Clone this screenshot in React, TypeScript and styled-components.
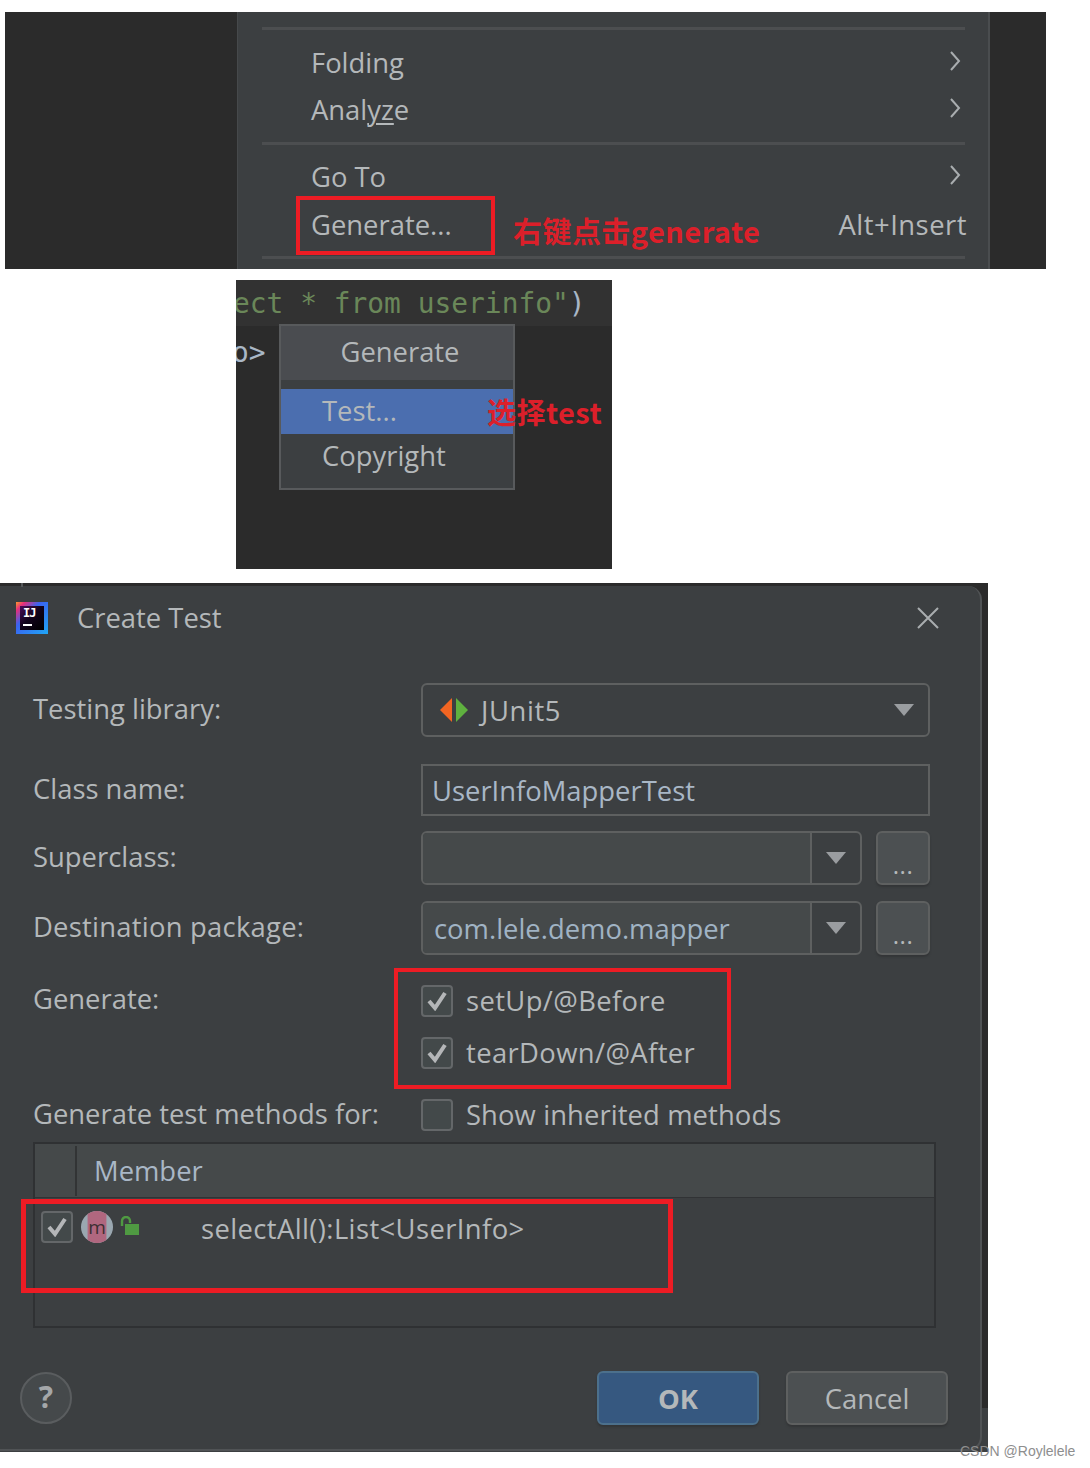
import React from "react";
import styled, { createGlobalStyle } from "styled-components";

const UI = `"Open Sans", "Noto Sans CJK SC", sans-serif`;
const RED = "#ed1c24";

const Global = createGlobalStyle`
  html, body { margin: 0; padding: 0; background: #fff; }
  * { box-sizing: border-box; }
`;

const Page = styled.div`
  position: relative;
  width: 1090px;
  height: 1468px;
  overflow: hidden;
  padding-top: 12px;
  font-family: ${UI};
  font-size: 27.4px;
  color: #b4b8ba;
  background: #fff;
`;

/* ---- shared overlays ---- */
const RedBox = styled.div<{ $x: number; $y: number; $w: number; $h: number; $t?: number }>`
  position: absolute;
  left: ${(p) => p.$x}px;
  top: ${(p) => p.$y}px;
  width: ${(p) => p.$w}px;
  height: ${(p) => p.$h}px;
  border: ${(p) => p.$t ?? 4}px solid ${RED};
`;
const Note = styled.div<{ $x: number; $y: number }>`
  position: absolute;
  left: ${(p) => p.$x}px;
  top: ${(p) => p.$y}px;
  font-family: "Noto Sans CJK SC", sans-serif;
  font-weight: 700;
  font-size: 29px;
  line-height: 36px;
  letter-spacing: 0.45px;
  color: #dc1f2a;
  white-space: nowrap;
`;

/* ---- context menu ---- */
const MenuShot = styled.section`
  margin-left: 5px;
  width: 1041px;
  height: 257px;
  background: #2b2b2b;
  padding-left: 232px;
  padding-right: 56px;
`;
const MenuPanel = styled.div`
  height: 100%;
  background: #3c3f41;
  border-left: 1px solid #46494b;
  border-right: 2px solid #4a4d4f;
  padding: 15px 23px 0 24px;
`;
const MenuRule = styled.div<{ $before?: number; $after?: number }>`
  height: 3px;
  background: #4c4e50;
  margin-top: ${(p) => p.$before ?? 0}px;
  margin-bottom: ${(p) => p.$after ?? 0}px;
`;
const MenuRow = styled.div<{ $h?: number }>`
  height: ${(p) => p.$h ?? 47}px;
  padding: 0 3px 0 49px;
  display: flex;
  align-items: center;
  justify-content: space-between;
`;
const MenuText = styled.span`
  margin-top: 1px;
`;
const Key = styled.span`
  margin: 1px -5px 0 0;
  letter-spacing: 0.5px;
`;
const U = styled.span`
  text-decoration: underline;
  text-underline-offset: 3px;
  text-decoration-thickness: 2px;
`;
const ChevronIcon = styled.svg`
  margin-top: -2px;
`;
const Chevron = () => (
  <ChevronIcon width="14" height="22" viewBox="0 0 14 22" fill="none">
    <path d="M3 2l8 9-8 9" stroke="#a9adaf" strokeWidth="2" />
  </ChevronIcon>
);

/* ---- editor with generate popup ---- */
const EditorShot = styled.section`
  position: relative;
  margin: 11px 0 0 236px;
  width: 376px;
  height: 289px;
  background: #2b2b2b;
  overflow: hidden;
  font-family: "DejaVu Sans Mono", monospace;
  font-size: 27.9px;
  color: #a9b7c6;
`;
const CodeBand = styled.div`
  height: 46px;
  line-height: 47px;
  background: #323232;
  white-space: pre;
  text-indent: -3px;
`;
const CodeLine = styled.div`
  line-height: 54px;
  text-indent: -4px;
  white-space: pre;
`;
const Str = styled.span`
  color: #6a8759;
`;
const Popup = styled.div`
  position: absolute;
  left: 43px;
  top: 44px;
  width: 236px;
  height: 166px;
  background: #3c3f41;
  border: 2px solid #585a5c;
  font-family: ${UI};
  font-size: 27.4px;
  color: #b4b8ba;
`;
const PopupHead = styled.div`
  height: 54px;
  line-height: 52px;
  background: #4a4c50;
  margin-bottom: 9px;
  text-align: center;
  padding-left: 6px;
`;
const PopupItem = styled.div<{ $on?: boolean }>`
  height: 45px;
  line-height: 44px;
  padding-left: 41px;
  background: ${(p) => (p.$on ? "#4b6eaf" : "transparent")};
`;

/* ---- Create Test dialog ---- */
const DialogFrame = styled.section`
  position: relative;
  margin-top: 14px;
  width: 988px;
  height: 869px;
  padding-top: 3px;
  background: linear-gradient(#2b2b2b 825px, #3c3f41 825px);
  &::before {
    content: "";
    position: absolute;
    left: 21px;
    top: 0;
    width: 2px;
    height: 4px;
    background: #55585a;
  }
`;
const Dialog = styled.div`
  width: 982px;
  height: 865px;
  padding-top: 16px;
  background: #3c3f41;
  border-right: 2px solid #505355;
  border-bottom: 2px solid #505355;
  border-radius: 0 14px 14px 0;
`;
const TitleBar = styled.header`
  display: flex;
  align-items: center;
  height: 32px;
  padding: 0 40px 0 16px;
`;
const Logo = styled.div`
  width: 32px;
  height: 32px;
  padding: 4px;
  background: linear-gradient(135deg, #fd9b2c 0%, #e62f7b 14%, #3a63f0 38%, #1fa7f5 100%);
  flex: none;
`;
const LogoInner = styled.div`
  width: 24px;
  height: 24px;
  background: linear-gradient(135deg, #4a0c58 0%, #12031c 45%, #000 100%);
  color: #fff;
  padding: 1px 0 0 3px;
  font-family: "DejaVu Sans Mono", monospace;
  font-weight: 700;
  font-size: 12px;
  line-height: 12px;
  letter-spacing: -1px;
  &::after {
    content: "";
    display: block;
    width: 9px;
    height: 2px;
    margin-top: 5px;
    background: #fff;
  }
`;
const Title = styled.h1`
  flex: 1;
  margin: 0 0 0 29px;
  font: inherit;
  line-height: 36px;
`;
const Form = styled.div`
  margin-top: 49px;
  padding-left: 33px;
  width: 930px;
`;
const Row = styled.div<{ $top?: number; $start?: boolean }>`
  display: flex;
  align-items: ${(p) => (p.$start ? "flex-start" : "center")};
  margin-top: ${(p) => p.$top ?? 0}px;
`;
const Label = styled.div<{ $wide?: boolean }>`
  width: 388px;
  height: 32px;
  line-height: 32px;
  flex: none;
  margin-top: -2px;
  white-space: nowrap;
  letter-spacing: ${(p) => (p.$wide ? "0.25px" : "0")};
`;
const Select = styled.div`
  flex: 1;
  height: 54px;
  border: 2px solid #5e6060;
  border-radius: 6px;
  display: flex;
  align-items: center;
  padding: 0 14px 0 16px;
`;
const SelectValue = styled.span`
  flex: 1;
  margin-left: 12px;
  letter-spacing: 0.6px;
`;
const Arrow = styled.span`
  flex: none;
  width: 0;
  height: 0;
  border-left: 10px solid transparent;
  border-right: 10px solid transparent;
  border-top: 12px solid #9a9da0;
`;
const TextField = styled.div`
  flex: 1;
  height: 52px;
  border: 2px solid #5e6060;
  padding-left: 9px;
  display: flex;
  align-items: center;
  color: #a9b7c6;
`;
const Combo = styled.div`
  width: 441px;
  height: 54px;
  border: 2px solid #5e6060;
  border-radius: 6px;
  display: flex;
  overflow: hidden;
`;
const ComboInput = styled.div`
  flex: 1;
  background: #45494a;
  border-right: 2px solid #5e6060;
  padding-left: 11px;
  display: flex;
  align-items: center;
  color: #a0b3c4;
`;
const ComboButton = styled.div`
  width: 48px;
  display: flex;
  align-items: center;
  justify-content: center;
`;
const Browse = styled.div`
  width: 54px;
  height: 54px;
  margin-left: 14px;
  border: 2px solid #5e6060;
  border-radius: 6px;
  background: #4c5052;
  box-shadow: 0 2px 2px #333537;
  text-align: center;
  font-size: 24px;
  line-height: 64px;
  letter-spacing: 0.5px;
`;
const Checks = styled.div`
  display: flex;
  flex-direction: column;
  gap: 20px;
`;
const CheckRow = styled.div`
  display: flex;
  align-items: center;
  height: 32px;
`;
const Box = styled.div`
  width: 32px;
  height: 32px;
  flex: none;
  border: 2px solid #646769;
  border-radius: 4px;
  background: #43494a;
  display: flex;
  align-items: center;
  justify-content: center;
`;
const CheckText = styled.span<{ $wide?: boolean }>`
  margin: -1px 0 0 13px;
  white-space: nowrap;
  letter-spacing: ${(p) => (p.$wide ? "0.38px" : "0.1px")};
`;
const Tick = () => (
  <svg width="22" height="20" viewBox="0 0 22 20" fill="none">
    <path d="M3 10l6 7L19 2" stroke="#b4b6b8" strokeWidth="4" />
  </svg>
);
const Table = styled.div`
  margin-top: 11px;
  width: 903px;
  height: 186px;
  border: 2px solid #2f3133;
  background: #3c3f41;
`;
const TableHead = styled.div`
  height: 54px;
  background: #45494a;
  border-bottom: 1px solid #313335;
  display: flex;
  align-items: center;
`;
const HeadSpacer = styled.div`
  width: 42px;
  height: 50px;
  border-right: 2px solid #323435;
`;
const HeadCell = styled.div`
  margin-left: 17px;
  color: #a9b7c6;
`;
const TableRow = styled.div`
  display: flex;
  align-items: center;
  height: 32px;
  margin-top: 13px;
  padding-left: 6px;
`;
const MemberIcon = styled.svg`
  margin-left: 8px;
  flex: none;
`;
const LockIcon = styled.svg`
  margin: -3px 0 0 7px;
  flex: none;
`;
const MemberName = styled.span`
  margin: 2px 0 0 61px;
  white-space: nowrap;
  letter-spacing: 0.4px;
`;
const Footer = styled.footer`
  display: flex;
  align-items: center;
  margin-top: 43px;
  padding: 0 32px 0 20px;
`;
const Help = styled.div`
  width: 52px;
  height: 52px;
  border-radius: 50%;
  background: #45494b;
  border: 2px solid #5a5d5f;
  text-align: center;
  font-weight: 700;
  font-size: 30px;
  line-height: 46px;
  color: #a4a7a9;
  margin-right: auto;
`;
const Button = styled.div<{ $primary?: boolean }>`
  width: 162px;
  height: 54px;
  margin-left: 27px;
  border-radius: 6px;
  border: 2px solid ${(p) => (p.$primary ? "#4c708c" : "#5e6060")};
  background: ${(p) => (p.$primary ? "#365880" : "#4c5052")};
  box-shadow: 0 2px 2px #333537;
  display: flex;
  align-items: center;
  justify-content: center;
  font-weight: ${(p) => (p.$primary ? 700 : 400)};
`;
const Watermark = styled.div`
  position: absolute;
  left: 960px;
  top: 1442px;
  font-family: "Liberation Sans", sans-serif;
  font-size: 14px;
  line-height: 18px;
  color: #8e8e8e;
  white-space: nowrap;
`;

export default function App() {
  return (
    <Page>
      <Global />
      <MenuShot>
        <MenuPanel>
          <MenuRule $after={8} />
          <MenuRow><MenuText>Folding</MenuText><Chevron /></MenuRow>
          <MenuRow><MenuText>Anal<U>yz</U>e</MenuText><Chevron /></MenuRow>
          <MenuRule $before={10} $after={7} />
          <MenuRow><MenuText>Go To</MenuText><Chevron /></MenuRow>
          <MenuRow $h={50}><MenuText>Generate...</MenuText><Key>Alt+Insert</Key></MenuRow>
          <MenuRule $before={7} />
        </MenuPanel>
      </MenuShot>

      <EditorShot>
        <CodeBand><Str>ect * from userinfo"</Str>)</CodeBand>
        <CodeLine>o&gt;</CodeLine>
        <Popup>
          <PopupHead>Generate</PopupHead>
          <PopupItem $on>Test...</PopupItem>
          <PopupItem>Copyright</PopupItem>
        </Popup>
      </EditorShot>

      <DialogFrame>
        <Dialog>
          <TitleBar>
            <Logo><LogoInner>IJ</LogoInner></Logo>
            <Title>Create Test</Title>
            <svg width="24" height="24" viewBox="0 0 24 24" fill="none">
              <path d="M2 2l20 20M22 2L2 22" stroke="#a9adaf" strokeWidth="2" />
            </svg>
          </TitleBar>
          <Form>
            <Row>
              <Label>Testing library:</Label>
              <Select>
                <svg width="30" height="24" viewBox="0 0 30 24">
                  <path d="M13 0v24L1 12z" fill="#f26522" />
                  <path d="M17 0v24l12-12z" fill="#5fb13f" />
                </svg>
                <SelectValue>JUnit5</SelectValue>
                <Arrow />
              </Select>
            </Row>
            <Row $top={27}>
              <Label>Class name:</Label>
              <TextField>UserInfoMapperTest</TextField>
            </Row>
            <Row $top={15}>
              <Label>Superclass:</Label>
              <Combo>
                <ComboInput />
                <ComboButton><Arrow /></ComboButton>
              </Combo>
              <Browse>...</Browse>
            </Row>
            <Row $top={16}>
              <Label $wide>Destination package:</Label>
              <Combo>
                <ComboInput>com.lele.demo.mapper</ComboInput>
                <ComboButton><Arrow /></ComboButton>
              </Combo>
              <Browse>...</Browse>
            </Row>
            <Row $top={30} $start>
              <Label>Generate:</Label>
              <Checks>
                <CheckRow><Box><Tick /></Box><CheckText $wide>setUp/@Before</CheckText></CheckRow>
                <CheckRow><Box><Tick /></Box><CheckText $wide>tearDown/@After</CheckText></CheckRow>
              </Checks>
            </Row>
            <Row $top={30}>
              <Label>Generate test methods for:</Label>
              <CheckRow><Box /><CheckText>Show inherited methods</CheckText></CheckRow>
            </Row>
            <Table>
              <TableHead>
                <HeadSpacer />
                <HeadCell>Member</HeadCell>
              </TableHead>
              <TableRow>
                <Box><Tick /></Box>
                <MemberIcon width="32" height="32" viewBox="0 0 32 32">
                  <circle cx="16" cy="16" r="16" fill="#9aa7b0" />
                  <path d="M6.6 3A16 16 0 0 1 25.4 3V29A16 16 0 0 1 6.6 29Z" fill="#b0677f" />
                  <text x="16" y="23" textAnchor="middle" fontSize="19" fontFamily="Open Sans" fill="#3c2f33">m</text>
                </MemberIcon>
                <LockIcon width="20" height="20" viewBox="0 0 20 20" fill="none">
                  <path d="M2 10V5a4 4 0 0 1 8 0v2" stroke="#4f9a42" strokeWidth="2.4" />
                  <rect x="5" y="8" width="14" height="11" fill="#4f9a42" />
                </LockIcon>
                <MemberName>selectAll():List&lt;UserInfo&gt;</MemberName>
              </TableRow>
            </Table>
          </Form>
          <Footer>
            <Help>?</Help>
            <Button $primary>OK</Button>
            <Button>Cancel</Button>
          </Footer>
        </Dialog>
      </DialogFrame>

      <RedBox $x={296} $y={196} $w={199} $h={59} />
      <Note $x={513} $y={212}>右键点击generate</Note>
      <Note $x={487} $y={393}>选择test</Note>
      <RedBox $x={394} $y={968} $w={337} $h={121} />
      <RedBox $x={21} $y={1199} $w={652} $h={94} $t={5} />
      <Watermark>CSDN @Roylelele</Watermark>
    </Page>
  );
}
